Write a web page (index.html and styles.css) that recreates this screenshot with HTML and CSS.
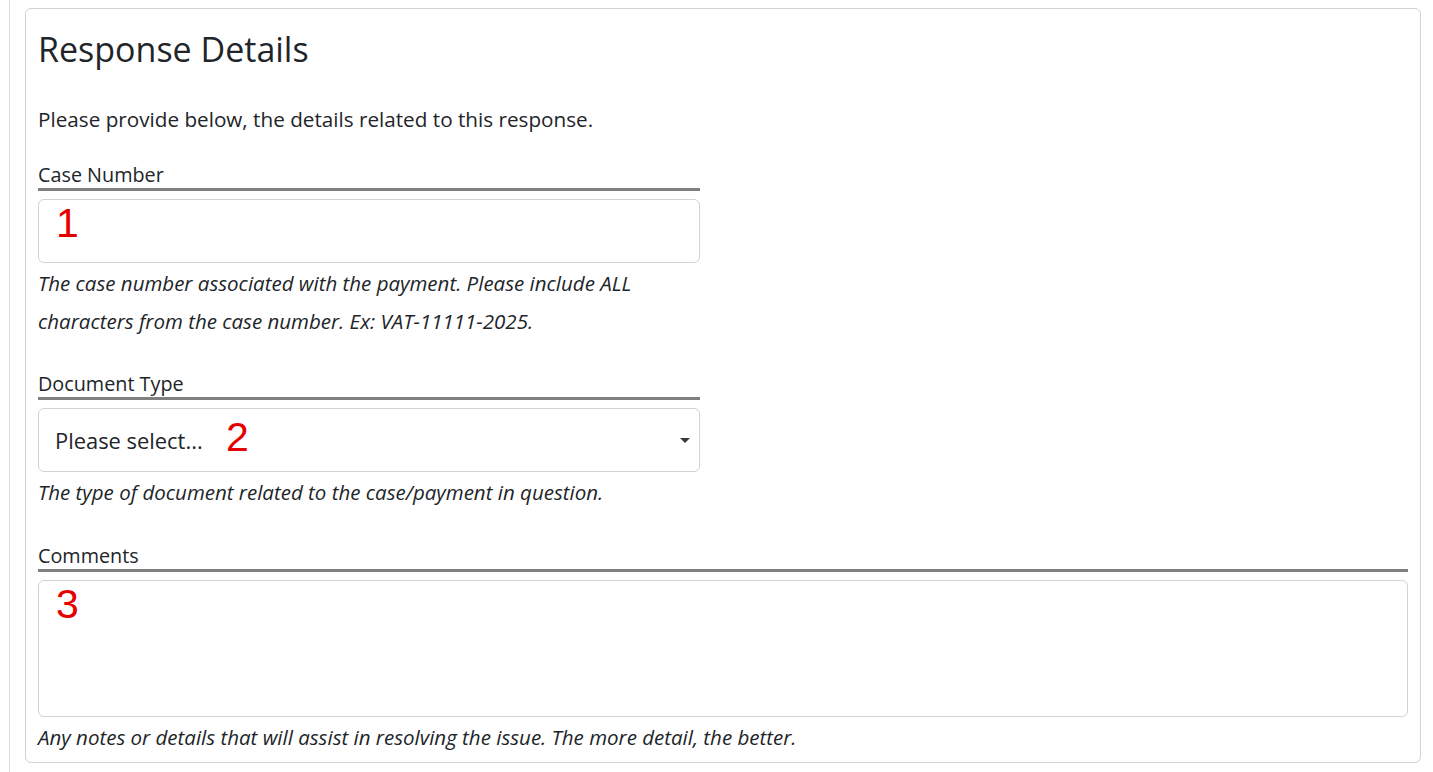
FILE: index.html
```html
<!DOCTYPE html>
<html lang="en">
<head>
    <meta charset="UTF-8">
    <meta name="viewport" content="width=device-width, initial-scale=1.0">
    <title>Response Details</title>
    <link rel="stylesheet" href="styles.css">
</head>
<body>
    <div class="page">
        <div class="card">
            <h2 class="card-title">Response Details</h2>
            <p class="intro">Please provide below, the details related to this response.</p>

            <div class="field">
                <label class="field-label" for="case-number">Case Number</label>
                <div class="control-wrap">
                    <input id="case-number" class="control" type="text">
                    <span class="marker marker-one">1</span>
                </div>
                <div class="help">The case number associated with the payment. Please include ALL characters from the case number. Ex: VAT-11111-2025.</div>
            </div>

            <div class="field">
                <label class="field-label" for="document-type">Document Type</label>
                <div class="control-wrap">
                    <select id="document-type" class="control control-select">
                        <option value="" selected>Please select...</option>
                        <option value="invoice">Invoice</option>
                        <option value="receipt">Receipt</option>
                    </select>
                    <svg class="caret" width="10" height="5" viewBox="0 0 10 5"><path d="M0 0h10L5 5z" fill="#343a40"/></svg>
                    <span class="marker marker-two">2</span>
                </div>
                <div class="help">The type of document related to the case/payment in question.</div>
            </div>

            <div class="field field-wide">
                <label class="field-label" for="comments">Comments</label>
                <div class="control-wrap">
                    <textarea id="comments" class="control control-area"></textarea>
                    <span class="marker marker-three">3</span>
                </div>
                <div class="help">Any notes or details that will assist in resolving the issue. The more detail, the better.</div>
            </div>
        </div>
    </div>
</body>
</html>
```

FILE: styles.css
```css
body, html {
    margin: 0;
    padding: 0;
    height: 100%;
    font-family: "Open Sans", "Noto Sans", sans-serif;
    color: #212529;
    background: #fff;
}

.page {
    box-sizing: border-box;
    height: 100%;
    margin-left: 9px;
    border-left: 1px solid #dcdcdc;
    padding: 8px 12px 0 15px;
}

.card {
    border: 1px solid #d2d2d2;
    border-radius: 6px;
    padding: 13px 12px 6px;
}

.card-title {
    margin: 7px 0 0;
    font-size: 34px;
    line-height: 40px;
    font-weight: 400;
}

.intro {
    margin: 36px 0 28px;
    font-size: 20.7px;
    line-height: 28px;
}

.field + .field {
    margin-top: 30px;
}

.field + .field-wide {
    margin-top: 31px;
}

.field-label {
    display: block;
    width: 662px;
    font-size: 19.8px;
    line-height: 27px;
    border-bottom: 3px solid #808080;
}

.field-wide .field-label {
    width: auto;
}

.control-wrap {
    position: relative;
    width: 662px;
    margin-top: 8px;
}

.field-wide .control-wrap {
    width: auto;
}

.control {
    display: block;
    box-sizing: border-box;
    width: 100%;
    height: 64px;
    margin: 0;
    border: 1px solid #ced4da;
    border-radius: 6px;
    background: #fff;
    font-family: inherit;
    color: #212529;
}

.control-select {
    appearance: none;
    -webkit-appearance: none;
    padding: 0 36px 0 16px;
    font-size: 21.9px;
}

.control-area {
    height: 137px;
    resize: none;
}

.caret {
    position: absolute;
    top: 30px;
    right: 10px;
}

.help {
    max-width: 662px;
    margin-top: 1px;
    font-size: 20.5px;
    font-style: italic;
    line-height: 38px;
}

.field-wide .help {
    max-width: none;
}

.marker {
    position: absolute;
    font-family: "Liberation Sans", Arial, sans-serif;
    font-size: 41px;
    line-height: 41px;
    color: #e60000;
}

.marker-one {
    top: 4px;
    left: 18px;
}

.marker-two {
    top: 9px;
    left: 188px;
}

.marker-three {
    top: 4px;
    left: 18px;
}
```
